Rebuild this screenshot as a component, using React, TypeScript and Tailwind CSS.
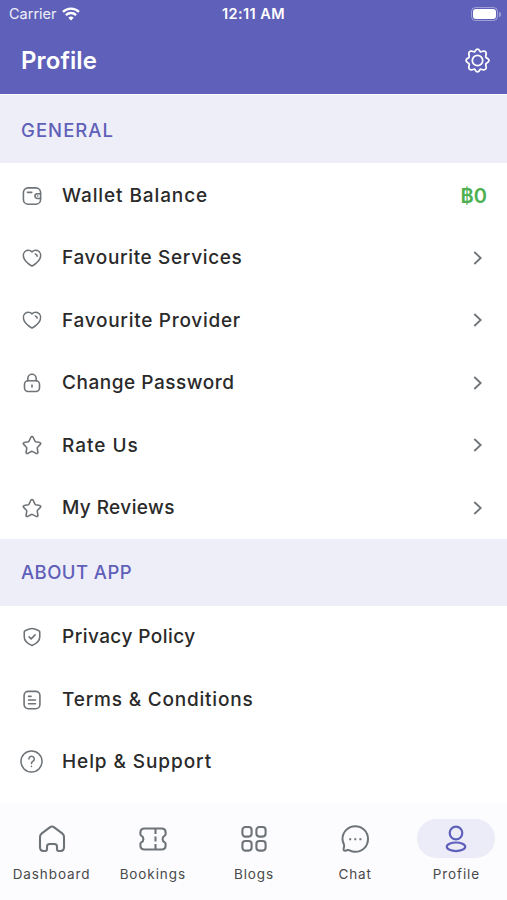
import React from "react"

interface IconProps {
    className?: string
}

interface RowItem {
    label: string
    icon: React.FC<IconProps>
    tracking: string
    trailing?: "amount" | "chevron"
}

const stroke = {
    viewBox: "0 0 24 24",
    fill: "none",
    stroke: "currentColor",
    strokeWidth: 1.9,
    strokeLinecap: "round",
    strokeLinejoin: "round",
} as const

const WalletIcon = ({ className }: IconProps) => (
    <svg {...stroke} className={className}>
        <rect x="1.7" y="2.2" width="20.6" height="19.6" rx="5.6" />
        <path d="M22.300 9.300h-4a2.800 2.800 0 0 0 0 5.600h4M6.500 7.600h5.300" />
        <path d="M18.600 12h.3" />
    </svg>
)

const HeartIcon = ({ className }: IconProps) => (
    <svg {...stroke} className={className}>
        <path d="M12 21.8C8.200 19.400 3.500 16 2.100 11.600.9 7.700 2.400 4.100 5.700 3c2.200-.7 4.700 0 6.300 1.700C13.600 3 16.100 2.300 18.300 3c3.300 1.100 4.800 4.700 3.600 8.600-1.400 4.400-6.100 7.800-9.900 10.200Z" />
        <path d="M15.900 7.200c1.300.3 2.200 1.300 2.300 2.600" />
    </svg>
)

const LockIcon = ({ className }: IconProps) => (
    <svg {...stroke} className={className}>
        <path d="M17 9.300V6.500a5 5 0 0 0-10 0v2.800" />
        <rect x="3" y="9.300" width="18" height="12.900" rx="4.300" />
        <path d="M12 14.500v2.400" />
    </svg>
)

const StarIcon = ({ className }: IconProps) => (
    <svg {...stroke} className={className}>
        <path d="m13.300 2.700 2.300 4.600c.2.400.7.800 1.100.9l4.500.7c1.300.2 1.700 1.500.8 2.400l-3.300 3.400c-.3.300-.5.800-.4 1.300l.8 4.600c.2 1.300-1 2.100-2.100 1.500l-4.200-2.200a1.800 1.800 0 0 0-1.600 0L7 22.100c-1.100.6-2.300-.2-2.100-1.500l.8-4.600c.1-.5-.1-1-.4-1.300L2 11.300c-.9-.9-.5-2.200.8-2.400l4.500-.7c.4-.1.900-.5 1.100-.9l2.300-4.600c.6-1.100 2-1.100 2.600 0Z" />
    </svg>
)

const ShieldIcon = ({ className }: IconProps) => (
    <svg {...stroke} className={className}>
        <path d="M12 1.700c.5 0 7 2.100 8.300 2.700.7.300 1 .8 1 1.600v6c0 5.500-4.700 8.300-9.300 10.200-4.600-1.900-9.300-4.700-9.300-10.200V6c0-.8.300-1.300 1-1.600C5 3.800 11.500 1.700 12 1.700Z" />
        <path d="m8.500 11.900 2.500 2.400 4.700-4.800" />
    </svg>
)

const DocumentIcon = ({ className }: IconProps) => (
    <svg {...stroke} className={className}>
        <rect x="2.500" y="1.600" width="19" height="20.800" rx="5" />
        <path d="M7.800 7.600h3.100M7.800 12h8.400M7.800 16.400h8.400" />
    </svg>
)

const HelpIcon = ({ className }: IconProps) => (
    <svg {...stroke} strokeWidth={1.600} className={className}>
        <circle cx="12" cy="12" r="11" />
        <path d="M9.300 9.400a2.800 2.800 0 1 1 4.300 2.300c-1 .7-1.600 1.100-1.600 2.300M12 17v.2" />
    </svg>
)

const SettingsIcon = ({ className }: IconProps) => (
    <svg {...stroke} strokeWidth={1.700} className={className}>
        <path d="M12 1c1.900 0 1.800 1.900 2.700 2.500.9.500 2-.7 3.600-.4 1.900.4 2.300 1.500 2 2.900-.3 1.300-.7 1.900-.2 2.900.6 1.100 2.900 1.200 2.900 3.100s-2.300 2-2.900 3.100c-.5 1-.1 1.600.2 2.900.3 1.400-.1 2.500-2 2.900-1.600.3-2.700-.9-3.600-.4-.9.600-.8 2.500-2.700 2.500s-1.800-1.900-2.700-2.500c-.9-.5-2 .7-3.600.4-1.900-.4-2.300-1.500-2-2.900.3-1.300.7-1.900.2-2.900C3.300 14 1 13.900 1 12s2.300-2 2.900-3.100c.5-1 .1-1.600-.2-2.900-.3-1.400.1-2.500 2-2.900 1.600-.3 2.700.9 3.600.4C10.200 2.900 10.100 1 12 1Z" />
        <circle cx="12" cy="12" r="5" />
    </svg>
)

const HomeIcon = ({ className }: IconProps) => (
    <svg viewBox="0 0 28 28" fill="none" stroke="currentColor" strokeWidth="2.100" strokeLinejoin="round" className={className}>
        <path d="M2 11.800c0-1.500.6-2.600 1.800-3.500l8-6c1.400-1 3-1 4.400 0l8 6c1.200.9 1.800 2 1.800 3.500v10.400c0 2.500-1.300 3.800-3.800 3.800h-1.400c-1.200 0-1.800-.7-1.800-1.900v-2.500c0-1.600-1-2.600-2.600-2.600h-4.800C10 19 9 20 9 21.600v2.500c0 1.200-.6 1.900-1.800 1.900H5.800C3.300 26 2 24.700 2 22.200Z" />
    </svg>
)

const TicketIcon = ({ className }: IconProps) => (
    <svg viewBox="0 0 28 28" fill="none" stroke="currentColor" strokeWidth="2.100" strokeLinejoin="round" className={className}>
        <path d="M5.400 3.500h17.200c2.500 0 4 1.500 4 4v1.800c0 .6-.3 1-.9 1.300-2.800 1.300-2.800 5.500 0 6.800.6.300.9.700.9 1.300v1.800c0 2.500-1.500 4-4 4H5.400c-2.500 0-4-1.500-4-4v-1.800c0-.6.3-1 .9-1.300 2.800-1.300 2.800-5.500 0-6.800-.6-.3-.9-.7-.9-1.300V7.500c0-2.500 1.500-4 4-4Z" />
        <path d="M16.500 4v5M16.500 11.500v5M16.500 19v5" />
    </svg>
)

const GridIcon = ({ className }: IconProps) => (
    <svg viewBox="0 0 28 28" fill="none" stroke="currentColor" strokeWidth="2.100" className={className}>
        <rect x="2.400" y="2" width="9.200" height="9.600" rx="3" />
        <rect x="16.400" y="2" width="9.200" height="9.600" rx="3" />
        <rect x="2.400" y="16" width="9.200" height="9.600" rx="3" />
        <rect x="16.400" y="16" width="9.200" height="9.600" rx="3" />
    </svg>
)

const ChatIcon = ({ className }: IconProps) => (
    <svg viewBox="0 0 28 28" fill="none" stroke="currentColor" strokeWidth="2" strokeLinejoin="round" className={className}>
        <path d="M14.300 1.200C21.400 1.200 27 6.700 27 14s-5.600 12.800-12.700 12.800c-2.300 0-4-.5-5.700-1.500-1.300-.8-2.300-.2-3.600.2-1.700.6-2.900 0-2.300-2.200.5-1.600.9-2.500.2-4C2 17.500 1.500 16 1.500 14c0-7.300 5.700-12.800 12.800-12.800Z" />
        <path d="M8.200 14.200h2M13.300 14.200h2M18.400 14.200h2" />
    </svg>
)

const UserIcon = ({ className }: IconProps) => (
    <svg viewBox="0 0 28 28" fill="none" stroke="currentColor" strokeWidth="2.200" className={className}>
        <circle cx="14" cy="8" r="6.300" />
        <ellipse cx="14" cy="21.800" rx="9.200" ry="4.300" />
    </svg>
)

const WifiIcon = ({ className }: IconProps) => (
    <svg viewBox="0 0 18 14" fill="none" stroke="currentColor" strokeWidth="2.300" className={className}>
        <path d="M1 4.900a11.400 11.400 0 0 1 16 0M3.900 8.100a7.300 7.300 0 0 1 10.200 0" />
        <path d="M9 13.500 6.300 10.700a3.900 3.900 0 0 1 5.400 0Z" fill="currentColor" stroke="none" />
    </svg>
)

const Chevron = () => (
    <svg viewBox="0 0 10 16" fill="none" stroke="currentColor" strokeWidth="1.800" className="mr-1 h-4 w-2.5 text-[#6e7377]">
        <path d="M1.300 2 7.700 8l-6.400 6" />
    </svg>
)

const GENERAL: RowItem[] = [
    { label: "Wallet Balance", icon: WalletIcon, tracking: "tracking-[0.9px]", trailing: "amount" },
    { label: "Favourite Services", icon: HeartIcon, tracking: "tracking-[0.65px]", trailing: "chevron" },
    { label: "Favourite Provider", icon: HeartIcon, tracking: "tracking-[0.72px]", trailing: "chevron" },
    { label: "Change Password", icon: LockIcon, tracking: "tracking-[0.53px]", trailing: "chevron" },
    { label: "Rate Us", icon: StarIcon, tracking: "tracking-[0.98px]", trailing: "chevron" },
    { label: "My Reviews", icon: StarIcon, tracking: "tracking-[0.4px]", trailing: "chevron" },
]

const ABOUT: RowItem[] = [
    { label: "Privacy Policy", icon: ShieldIcon, tracking: "tracking-[0.44px]" },
    { label: "Terms & Conditions", icon: DocumentIcon, tracking: "tracking-[0.8px]" },
    { label: "Help & Support", icon: HelpIcon, tracking: "tracking-[0.92px]" },
]

const TABS = [
    { label: "Dashboard", icon: HomeIcon },
    { label: "Bookings", icon: TicketIcon },
    { label: "Blogs", icon: GridIcon },
    { label: "Chat", icon: ChatIcon },
    { label: "Profile", icon: UserIcon, active: true },
]

const Row = ({ label, icon: Icon, tracking, trailing }: RowItem) => (
    <div className="flex h-[62.4px] items-center pr-5 pl-5">
        <div className="flex w-[42px] shrink-0">
            <Icon className={label === "Help & Support" ? "size-[23px] text-[#6e7377]" : "ml-[1.5px] size-5 text-[#6e7377]"} />
        </div>
        <span className={`flex-1 pt-px text-[19px] font-medium whitespace-nowrap text-[#2a2a2a] ${tracking}`}>{label}</span>
        {trailing === "chevron" && <Chevron />}
        {trailing === "amount" && <span className="text-[20px] font-semibold text-[#4caf50]">฿0</span>}
    </div>
)

const App = () => {
    return (
        <div className="flex h-[900px] w-[507px] flex-col overflow-hidden bg-white font-[Inter,sans-serif]">
            <header className="h-[94px] shrink-0 bg-[#5f60b9] text-white">
                <div className="grid h-7 grid-cols-3 items-center pr-1.5 pl-[9px]">
                    <div className="flex items-center gap-[5px] text-[14.5px] text-white/90">
                        <span>Carrier</span>
                        <WifiIcon className="h-3.5 w-[18px] text-white" />
                    </div>
                    <span className="-ml-[3px] text-center text-[14.5px] font-semibold tracking-[0.4px] whitespace-nowrap">12:11 AM</span>
                    <div className="flex items-center justify-end gap-px">
                        <div className="h-3.5 w-[27px] rounded-[4.5px] border border-white/40 p-px">
                            <div className="h-full rounded-[3px] bg-white" />
                        </div>
                        <div className="h-[5px] w-0.5 rounded-r bg-white/40" />
                    </div>
                </div>
                <div className="flex h-[66px] items-center justify-between pr-[17px] pb-0.5 pl-[21px]">
                    <h1 className="pt-0.5 text-[24px] font-semibold tracking-[0.1px]">Profile</h1>
                    <SettingsIcon className="size-[25px]" />
                </div>
            </header>

            <h2 className="mt-px flex h-[68px] shrink-0 items-center bg-[#eeeef8] pt-[3px] pl-[21px] text-[18.5px] font-medium tracking-[1.05px] text-[#5f60b9]">
                GENERAL
            </h2>
            <div className="h-[376px] shrink-0 pt-[1.5px]">
                {GENERAL.map((item) => (
                    <Row key={item.label} {...item} />
                ))}
            </div>

            <h2 className="flex h-[67px] shrink-0 items-center bg-[#eeeef8] pl-[21px] text-[18.5px] font-medium tracking-[0.45px] text-[#5f60b9]">
                ABOUT APP
            </h2>
            <div className="h-[196px] shrink-0">
                {ABOUT.map((item) => (
                    <Row key={item.label} {...item} />
                ))}
            </div>

            <nav className="grid h-[98px] shrink-0 grid-cols-5 bg-[#fcfcff] pl-px">
                {TABS.map(({ label, icon: Icon, active }) => (
                    <div key={label} className="flex flex-col items-center pt-[17px]">
                        <div
                            className={
                                active
                                    ? "flex h-[39px] w-[78px] items-center justify-center rounded-full bg-[#ececf8] text-[#5f60b9]"
                                    : "flex h-[39px] w-[78px] items-center justify-center text-[#6e7377]"
                            }
                        >
                            <Icon className="size-7" />
                        </div>
                        <span className="mt-1.5 text-[13.5px] leading-5 tracking-[0.9px] text-[#4a4a4a]">{label}</span>
                    </div>
                ))}
            </nav>
        </div>
    )
}

export default App
